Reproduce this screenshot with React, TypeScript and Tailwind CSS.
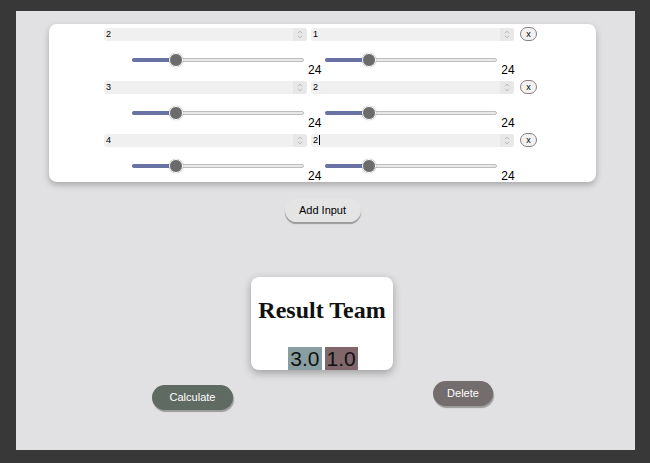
import React from 'react';

const rows = [
  { a: '2', b: '1', focus: false },
  { a: '3', b: '2', focus: false },
  { a: '4', b: '2', focus: true },
];

function Spinner() {
  return (
    <div className="h-full w-[14px] bg-[#e8e8e8] flex items-center justify-center">
      <svg width="6" height="9" viewBox="0 0 6 9" fill="none" stroke="#a8a8a8" strokeWidth="0.8">
        <path d="M1 3.2 L3 1.2 L5 3.2" />
        <path d="M1 5.8 L3 7.8 L5 5.8" />
      </svg>
    </div>
  );
}

function NumberBox({ value, focus }: { value: string; focus?: boolean }) {
  return (
    <div className="w-[203px] h-[13px] bg-[#f0f0f0] rounded-[3px] flex items-center justify-between overflow-hidden">
      <span className="pl-[2px] text-[9px] leading-none text-black flex items-center">
        {value}
        {focus && <span className="inline-block w-px h-[10px] bg-black ml-[1px]" />}
      </span>
      <Spinner />
    </div>
  );
}

function Slider() {
  return (
    <div className="relative w-[172px] h-[14px] flex items-center">
      <div className="w-full h-[4px] rounded-full bg-[#e9e9e9] border border-[#bdbdbd]" />
      <div className="absolute left-0 h-[4px] w-[44px] rounded-full bg-[#6872a3]" />
      <div className="absolute left-[37px] w-[14px] h-[14px] rounded-full bg-[#6b6b6b] border border-white shadow-[0_0_1px_rgba(0,0,0,0.5)]" />
    </div>
  );
}

export default function App() {
  return (
    <div className="w-[650px] h-[463px] bg-[#383838] pl-[16px] pr-[15px] pt-[11px] pb-[13px] font-['Liberation_Sans',Arial,sans-serif]">
      <div className="w-full h-full bg-[#e1e1e3] flex flex-col">
        <div className="ml-[33px] mt-[13px] w-[547px] h-[158px] bg-white rounded-[8px] shadow-[0_3px_6px_rgba(0,0,0,0.25)] pt-[3px]">
          {rows.map((r, i) => (
            <div key={i} className="h-[53px]">
              <div className="flex items-center pl-[55px]">
                <NumberBox value={r.a} />
                <div className="w-[4px]" />
                <NumberBox value={r.b} focus={r.focus} />
                <div className="ml-[6px] w-[17px] h-[14px] rounded-full border border-[#8d7d7d] bg-[#f2f2f2] flex items-center justify-center text-[9px] leading-none text-black">
                  x
                </div>
              </div>
              <div className="flex items-start mt-[12px]">
                <div className="ml-[83px] flex items-start">
                  <Slider />
                  <span className="ml-[4px] mt-[11px] text-[12px] leading-none text-black">24</span>
                </div>
                <div className="ml-[4px] flex items-start">
                  <Slider />
                  <span className="ml-[4px] mt-[11px] text-[12px] leading-none text-black">24</span>
                </div>
              </div>
            </div>
          ))}
        </div>

        <div className="flex justify-center mt-[17px]">
          <button className="w-[76px] h-[23px] rounded-[12px] bg-[#e4e4e4] shadow-[0_2px_1px_#9a9a9a] text-[11px] text-black -ml-[6px]">
            Add Input
          </button>
        </div>

        <div className="flex justify-center mt-[55px]">
          <div className="w-[142px] h-[93px] bg-white rounded-[8px] shadow-[0_3px_8px_rgba(0,0,0,0.3)] -ml-[7px] flex flex-col items-center overflow-hidden">
            <div className="mt-[19px] font-['Liberation_Serif','Times_New_Roman',serif] font-bold text-[24px] leading-[28px] text-[#111]">
              Result Team
            </div>
            <div className="mt-[23px] flex items-start gap-[3px] ml-[2px] shrink-0">
              <span className="bg-[#889ea1] px-[2px] text-[21px] leading-[24px] text-[#111]">3.0</span>
              <span className="bg-[#7f676b] px-[2px] text-[21px] leading-[24px] text-[#111]">1.0</span>
            </div>
          </div>
        </div>

        <div className="flex justify-between items-start mt-[11px] pl-[136px] pr-[142px]">
          <button className="mt-[4px] w-[81px] h-[25px] rounded-full bg-[#5f6a62] shadow-[1px_2px_1px_#9a9a9a] text-[11px] text-white">
            Calculate
          </button>
          <button className="w-[60px] h-[25px] rounded-full bg-[#746d6d] shadow-[1px_2px_1px_#9a9a9a] text-[11px] text-white">
            Delete
          </button>
        </div>
      </div>
    </div>
  );
}
